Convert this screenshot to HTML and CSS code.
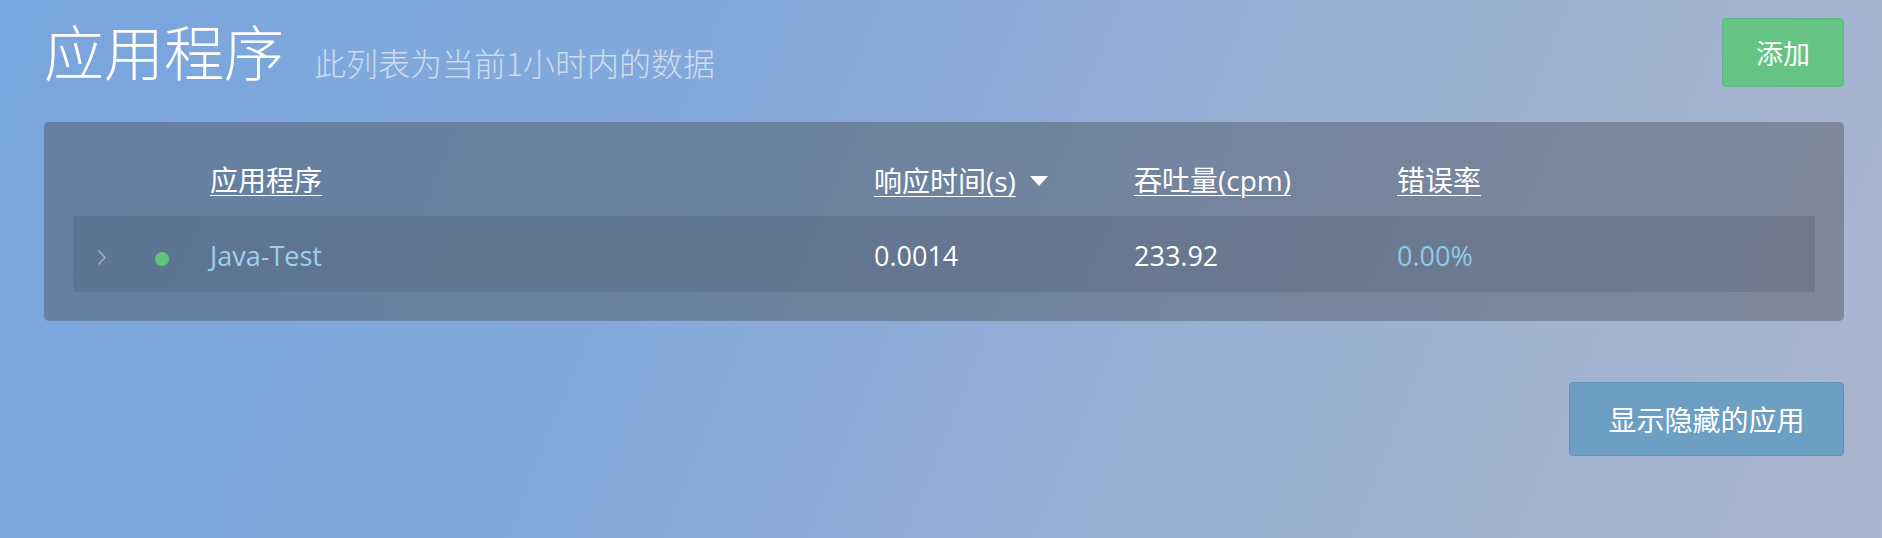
FILE: index.html
```html
<!DOCTYPE html>
<html lang="zh-CN">
<head>
<meta charset="utf-8">
<title>应用程序</title>
<link rel="stylesheet" href="styles.css">
</head>
<body>
<div class="page">
  <header class="top">
    <div class="heading">
      <h1 class="title">应用程序</h1>
      <span class="subtitle">此列表为当前1小时内的数据</span>
    </div>
    <button class="btn btn-add">添加</button>
  </header>

  <section class="panel">
    <div class="grid thead">
      <div class="cell"></div>
      <div class="cell"></div>
      <div class="cell"><a class="th-link">应用程序</a></div>
      <div class="cell sorted"><a class="th-link">响应时间(s)</a>
        <svg class="sort-icon" width="18" height="10" viewBox="0 0 18 10"><polygon points="0,0 18,0 9,10" fill="#ffffff"/></svg>
      </div>
      <div class="cell"><a class="th-link">吞吐量(cpm)</a></div>
      <div class="cell"><a class="th-link">错误率</a></div>
    </div>
    <div class="grid trow">
      <div class="cell chev">
        <svg width="10" height="17" viewBox="0 0 10 17"><polyline points="1.5,1.5 8,8.5 1.5,15.5" fill="none" stroke="#a3adbb" stroke-width="1.7"/></svg>
      </div>
      <div class="cell dotcell"><span class="dot"></span></div>
      <div class="cell name">Java-Test</div>
      <div class="cell val">0.0014</div>
      <div class="cell val">233.92</div>
      <div class="cell err">0.00%</div>
    </div>
  </section>

  <div class="actions">
    <button class="btn btn-hidden">显示隐藏的应用</button>
  </div>
</div>
</body>
</html>
```

FILE: styles.css
```css
html, body {
  margin: 0;
  padding: 0;
  height: 100%;
}
body {
  font-family: "Open Sans", "Noto Sans CJK SC", sans-serif;
  color: #ffffff;
  background: linear-gradient(112deg, #79a6de 0%, #84a9da 38%, #98b0d3 65%, #aab6cd 100%);
  min-height: 538px;
}
.page {
  padding: 18px 38px 0 44px;
}
.top {
  display: flex;
  justify-content: space-between;
  align-items: flex-start;
  height: 104px;
}
.heading {
  display: flex;
  align-items: baseline;
  margin-top: -3px;
}
.title {
  margin: 0;
  font-family: "Noto Sans CJK SC", sans-serif;
  font-weight: 300;
  font-size: 60px;
  line-height: 70px;
  color: #ffffff;
}
.subtitle {
  margin-left: 30px;
  font-family: "Noto Sans CJK SC", sans-serif;
  font-weight: 300;
  font-size: 32px;
  color: rgba(235, 240, 248, 0.72);
}
.btn {
  font-family: "Noto Sans CJK SC", sans-serif;
  color: #ffffff;
  border-radius: 4px;
  cursor: pointer;
}
.btn-add {
  width: 122px;
  height: 69px;
  font-size: 27px;
  background: #66c386;
  border: 1px solid #5db97e;
}
.panel {
  background: rgba(75, 82, 92, 0.45);
  border-radius: 5px;
  padding: 0 29px 29px;
}
.grid {
  display: grid;
  grid-template-columns: 64px 73px 664px 260px 263px 1fr;
  font-size: 27px;
}
.thead {
  height: 94px;
  align-items: end;
  box-sizing: border-box;
  padding-bottom: 17px;
  line-height: 36px;
}
.th-link {
  color: #ffffff;
  text-decoration: underline;
  text-underline-offset: 4px;
  text-decoration-thickness: 1px;
  font-size: 28px;
}
.sorted {
  display: flex;
  align-items: center;
  gap: 14px;
}
.trow {
  height: 76px;
  box-sizing: border-box;
  padding-top: 3px;
  align-items: center;
  background: rgba(60, 70, 90, 0.2);
}
.chev {
  padding-left: 24px;
  padding-top: 4px;
  display: flex;
  align-items: center;
}
.dotcell {
  padding-left: 18px;
  padding-top: 6px;
  display: flex;
  align-items: center;
}
.dot {
  width: 14px;
  height: 14px;
  border-radius: 50%;
  background: #5ec47c;
}
.name {
  color: #9dd0f0;
}
.val {
  color: #ffffff;
}
.err {
  color: #8fc9ec;
}
.actions {
  display: flex;
  justify-content: flex-end;
  margin-top: 61px;
}
.btn-hidden {
  width: 275px;
  height: 74px;
  font-size: 28px;
  background: #6d9fc3;
  border: 1px solid #6193ba;
}
```
